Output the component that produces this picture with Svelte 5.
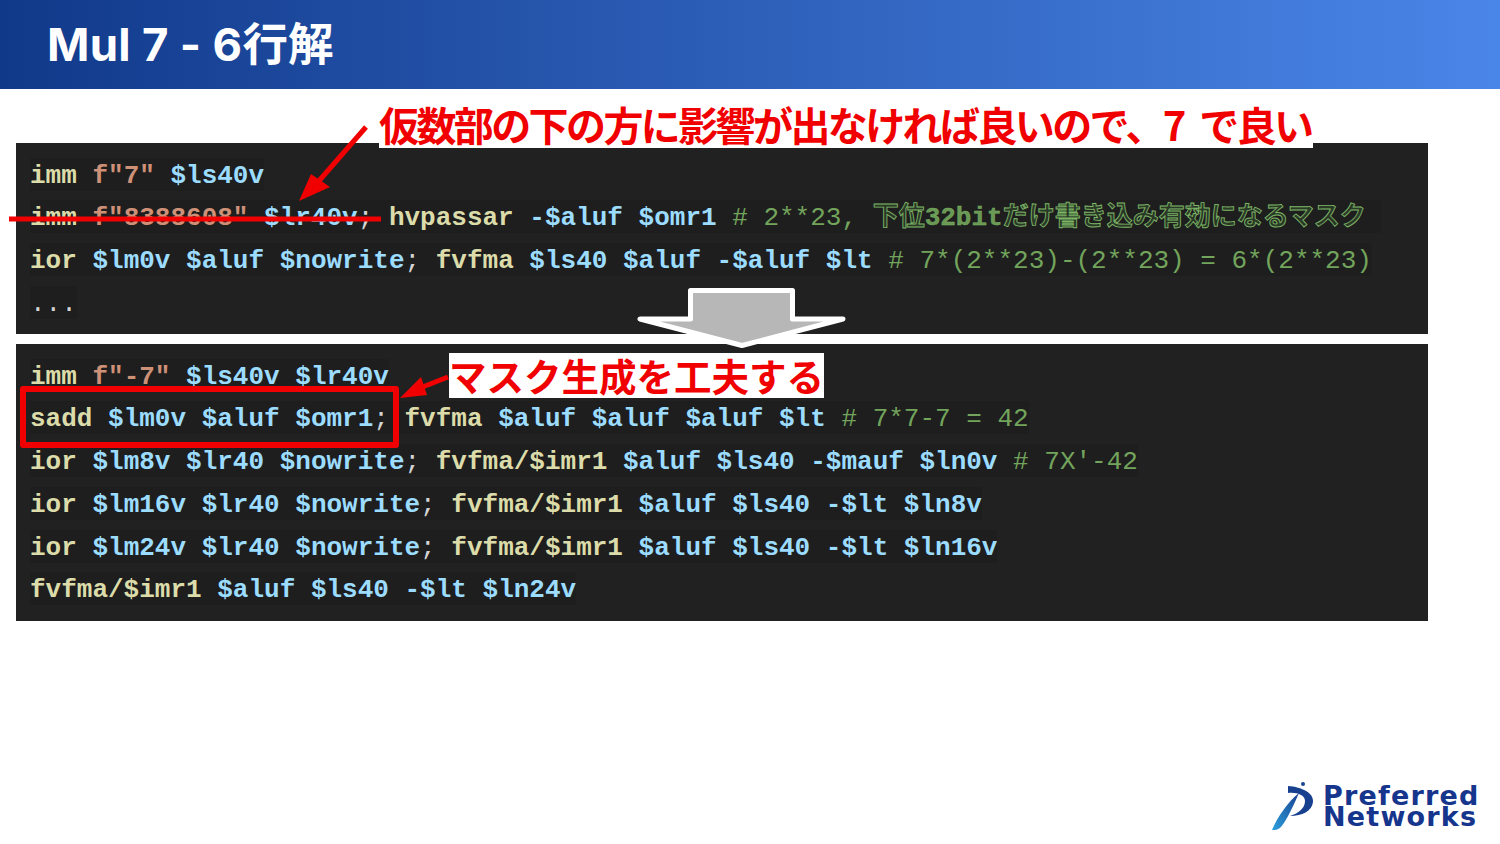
<script>
  // each token: [text, kind]
  const k = "fn", s = "str", v = "var", c = "cm", p = "pl";

  const firstBlock = [
    [["imm", k], [" ", p], ['f"7"', s], [" ", p], ["$ls40v", v]],
    [
      ["imm", k], [" ", p], ['f"8388608"', s], [" ", p], ["$lr40v", v], ["; ", p],
      ["hvpassar", k], [" ", p], ["-$aluf", v], [" ", p], ["$omr1", v], [" ", p],
      ["# 2**23, ", c], ["下位", "hollow"], ["32bit", "outline"], ["だけ書き込み有効になるマスク", "hollow"], [" ", p],
    ],
    [
      ["ior", k], [" ", p], ["$lm0v", v], [" ", p], ["$aluf", v], [" ", p], ["$nowrite", v], ["; ", p],
      ["fvfma", k], [" ", p], ["$ls40", v], [" ", p], ["$aluf", v], [" ", p], ["-$aluf", v], [" ", p], ["$lt", v], [" ", p],
      ["# 7*(2**23)-(2**23) = 6*(2**23)", c],
    ],
    [["...", p]],
  ];

  const secondBlock = [
    [["imm", k], [" ", p], ['f"-7"', s], [" ", p], ["$ls40v", v], [" ", p], ["$lr40v", v]],
    [
      ["sadd", k], [" ", p], ["$lm0v", v], [" ", p], ["$aluf", v], [" ", p], ["$omr1", v], ["; ", p],
      ["fvfma", k], [" ", p], ["$aluf", v], [" ", p], ["$aluf", v], [" ", p], ["$aluf", v], [" ", p], ["$lt", v], [" ", p],
      ["# 7*7-7 = 42", c],
    ],
    [
      ["ior", k], [" ", p], ["$lm8v", v], [" ", p], ["$lr40", v], [" ", p], ["$nowrite", v], ["; ", p],
      ["fvfma/$imr1", k], [" ", p], ["$aluf", v], [" ", p], ["$ls40", v], [" ", p], ["-$mauf", v], [" ", p], ["$ln0v", v], [" ", p],
      ["# 7X'-42", c],
    ],
    [
      ["ior", k], [" ", p], ["$lm16v", v], [" ", p], ["$lr40", v], [" ", p], ["$nowrite", v], ["; ", p],
      ["fvfma/$imr1", k], [" ", p], ["$aluf", v], [" ", p], ["$ls40", v], [" ", p], ["-$lt", v], [" ", p], ["$ln8v", v],
    ],
    [
      ["ior", k], [" ", p], ["$lm24v", v], [" ", p], ["$lr40", v], [" ", p], ["$nowrite", v], ["; ", p],
      ["fvfma/$imr1", k], [" ", p], ["$aluf", v], [" ", p], ["$ls40", v], [" ", p], ["-$lt", v], [" ", p], ["$ln16v", v],
    ],
    [
      ["fvfma/$imr1", k], [" ", p], ["$aluf", v], [" ", p], ["$ls40", v], [" ", p], ["-$lt", v], [" ", p], ["$ln24v", v],
    ],
  ];
</script>

{#snippet code(lines)}
  <div class="code">
    {#each lines as line}
      <div class="line"><span class="bg">{#each line as [text, kind]}<span class={kind}>{text}</span>{/each}</span></div>
    {/each}
  </div>
{/snippet}

<div class="slide">
  <header class="title-bar">
    <h1>Mul 7 - 6<span class="cjk">行解</span></h1>
  </header>

  <main class="blocks">
    {@render code(firstBlock)}
    {@render code(secondBlock)}
  </main>

  <div class="note note-top">仮数部の下の方に影響が出なければ良いので、7 で良い</div>
  <div class="note note-mid">マスク生成を工夫する</div>
  <div class="red-box"></div>

  <svg class="overlay" width="1500" height="844" viewBox="0 0 1500 844" aria-hidden="true">
    <line x1="9" y1="219" x2="381" y2="219" stroke="#f00000" stroke-width="5" />
    <line x1="366" y1="127" x2="318" y2="182" stroke="#f00000" stroke-width="5" />
    <polygon points="299,201 311,174 330,187" fill="#f00000" />
    <line x1="448" y1="377" x2="420" y2="388" stroke="#f00000" stroke-width="5" />
    <polygon points="400,398 421,377 427,395" fill="#f00000" />
    <polygon
      points="690.5,290.5 792.5,290.5 792.5,319 843,319 742,345.5 640,319 690.5,319"
      fill="#b7b7b7"
      stroke="#fff"
      stroke-width="5"
      stroke-linejoin="round"
    />
  </svg>

  <div class="logo">
    <svg width="46" height="52" viewBox="0 0 46 52" aria-hidden="true">
      <defs>
        <linearGradient id="leg" x1="0" y1="1" x2="1" y2="0">
          <stop offset="0" stop-color="#2ea0dc" />
          <stop offset="1" stop-color="#16408f" />
        </linearGradient>
      </defs>
      <circle cx="31" cy="4" r="2" fill="#1c4596" />
      <path d="M16 6 C30 7 42 13 41 22 C40 31 30 36 18 36 C27 33 33 28 33 21 C33 15 25 12 16 13 Z" fill="#17418f" />
      <path d="M0 50 C6 36 16 22 27 13 C22 24 16 38 9 47 C6 50 3 50 0 50 Z" fill="url(#leg)" />
    </svg>
    <div class="logo-text">
      <span>Preferred</span>
      <span>Networks</span>
    </div>
  </div>
</div>

<style>
  :global(body) {
    margin: 0;
    background: #fff;
  }

  .slide {
    position: relative;
    width: 1500px;
    height: 844px;
    overflow: hidden;
    background: #fff;
  }

  .title-bar {
    height: 89px;
    display: flex;
    align-items: center;
    padding-left: 47px;
    background: linear-gradient(90deg, #11398a 0%, #4a86e8 100%);
  }

  h1 {
    margin: 0 0 2px;
    color: #fff;
    font-family: "Inter", "Noto Sans CJK JP", sans-serif;
    font-size: 45.5px;
    font-weight: 700;
    line-height: 1;
    letter-spacing: 0.3px;
  }

  .cjk {
    font-family: "Noto Sans CJK JP", sans-serif;
    font-weight: 700;
    letter-spacing: 0;
  }

  .blocks {
    display: flex;
    flex-direction: column;
    gap: 10px;
    width: 1412px;
    margin: 54px 0 0 16px;
  }

  .code {
    padding: 10px 14px;
    background: #212121;
    font-family: "Liberation Mono", "Noto Sans CJK JP", monospace;
    font-size: 26px;
    font-weight: 700;
    line-height: 42.75px;
    white-space: pre;
  }

  .bg {
    display: inline-block;
    height: 33px;
    line-height: 37px;
    background: #1e1e1e;
    vertical-align: middle;
  }

  .fn { color: #dcdcaa; }
  .str { color: #ce9178; }
  .var { color: #9cdcfe; }
  .pl { color: #d4d4d4; font-weight: 400; }
  .cm { color: #72a45c; font-weight: 400; }

  .hollow {
    color: #2a3826;
    -webkit-text-stroke: 0.9px #7db566;
    font-weight: 700;
  }

  .outline {
    color: #6a9955;
    -webkit-text-stroke: 0.4px #7db566;
    font-weight: 700;
  }

  .note {
    position: absolute;
    background: #fff;
    color: #f00000;
    font-family: "Noto Sans CJK JP", sans-serif;
    font-weight: 700;
    white-space: nowrap;
  }

  .note-top {
    left: 379px;
    top: 103px;
    width: 934px;
    height: 45px;
    font-size: 40px;
    line-height: 43px;
    letter-spacing: -2.6px;
    word-spacing: 9px;
  }

  .note-mid {
    left: 449px;
    top: 353px;
    width: 375px;
    height: 45px;
    font-size: 37.5px;
    line-height: 43px;
    text-align: center;
    box-sizing: border-box;
  }

  .red-box {
    position: absolute;
    left: 20px;
    top: 386px;
    width: 367px;
    height: 50px;
    border: 6px solid #f00000;
    border-radius: 3px;
  }

  .overlay {
    position: absolute;
    left: 0;
    top: 0;
    pointer-events: none;
  }

  .logo {
    position: absolute;
    left: 1272px;
    top: 780px;
    display: flex;
    gap: 5px;
    align-items: center;
  }

  .logo-text {
    display: flex;
    flex-direction: column;
    padding-top: 1px;
    color: #16358c;
    font-family: "DejaVu Sans", sans-serif;
    font-size: 27px;
    font-weight: 700;
    line-height: 20.5px;
    letter-spacing: 1.2px;
  }
</style>
